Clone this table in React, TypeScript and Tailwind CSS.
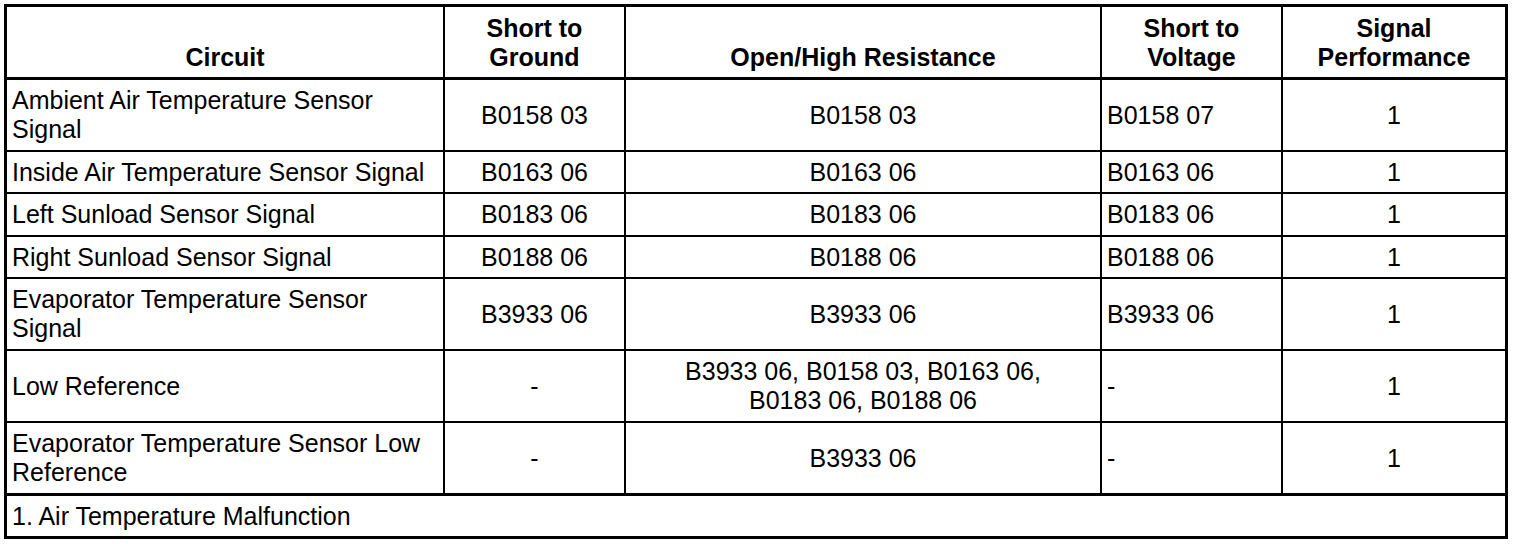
const cols = ['w-[438px]', 'w-[181px]', 'w-[476px]', 'w-[181px]', 'w-[222px]']

type Row = { h: string; cells: string[][] }

const rows: Row[] = [
  { h: 'h-[72px]', cells: [['Ambient Air Temperature Sensor', 'Signal'], ['B0158 03'], ['B0158 03'], ['B0158 07'], ['1']] },
  { h: 'h-[42px]', cells: [['Inside Air Temperature Sensor Signal'], ['B0163 06'], ['B0163 06'], ['B0163 06'], ['1']] },
  { h: 'h-[43px]', cells: [['Left Sunload Sensor Signal'], ['B0183 06'], ['B0183 06'], ['B0183 06'], ['1']] },
  { h: 'h-[42px]', cells: [['Right Sunload Sensor Signal'], ['B0188 06'], ['B0188 06'], ['B0188 06'], ['1']] },
  { h: 'h-[72px]', cells: [['Evaporator Temperature Sensor', 'Signal'], ['B3933 06'], ['B3933 06'], ['B3933 06'], ['1']] },
  { h: 'h-[72px]', cells: [['Low Reference'], ['-'], ['B3933 06, B0158 03, B0163 06,', 'B0183 06, B0188 06'], ['-'], ['1']] },
  { h: 'h-[73px]', cells: [['Evaporator Temperature Sensor Low', 'Reference'], ['-'], ['B3933 06'], ['-'], ['1']] },
]

const headers = [['Circuit'], ['Short to', 'Ground'], ['Open/High Resistance'], ['Short to', 'Voltage'], ['Signal', 'Performance']]

// left-aligned columns: circuit and short to voltage
const align = [
  'justify-start text-left pl-[5px]',
  'justify-center text-center',
  'justify-center text-center',
  'justify-start text-left pl-[5px]',
  'justify-center text-center',
]

export default function App() {
  return (
    <div className="min-h-screen bg-white pt-[4px] pl-[4px] text-black font-['Liberation_Sans',Arial,sans-serif] text-[25px] leading-[29px]">
      <div className="w-[1504px] border-[3px] border-black">
        <div className="flex h-[73px] border-b-[3px] border-black font-bold">
          {headers.map((lines, i) => (
            <div
              key={i}
              className={`${cols[i]} ${i < 4 ? 'border-r-2 border-black' : ''} flex flex-col items-center justify-end pb-[5px] text-center`}
            >
              {lines.map(l => (
                <div key={l}>{l}</div>
              ))}
            </div>
          ))}
        </div>

        {rows.map((row, r) => (
          <div
            key={r}
            className={`flex ${row.h} border-black ${r === rows.length - 1 ? 'border-b-[3px]' : 'border-b-2'}`}
          >
            {row.cells.map((lines, i) => (
              <div
                key={i}
                className={`${cols[i]} ${i < 4 ? 'border-r-2 border-black' : ''} flex items-center ${align[i]}`}
              >
                <div>
                  {lines.map(l => (
                    <div key={l}>{l}</div>
                  ))}
                </div>
              </div>
            ))}
          </div>
        ))}

        <div className="flex h-[40px] items-center pl-[5px]">1. Air Temperature Malfunction</div>
      </div>
    </div>
  )
}
